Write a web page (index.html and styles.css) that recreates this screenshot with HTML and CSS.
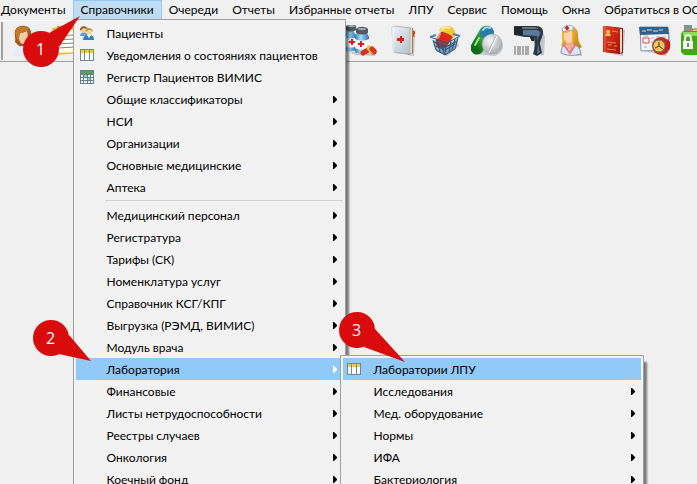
FILE: index.html
```html
<!DOCTYPE html>
<html lang="ru">
  <head>
    <meta charset="UTF-8" />
    <meta name="viewport" content="width=device-width, initial-scale=1.0" />
    <title>Справочники</title>
    <link rel="stylesheet" href="styles.css">
  </head>
  <body>
    <svg class="sprite" aria-hidden="true">
      <defs>
        <linearGradient id="glass" x1="0" x2="1" y1="0" y2="0">
          <stop offset="0" stop-color="#2d7fb8" />
          <stop offset="0.4" stop-color="#a5d8f5" />
          <stop offset="1" stop-color="#2f78b2" />
        </linearGradient>
        <linearGradient id="cover" x1="0" x2="1" y1="0" y2="1">
          <stop offset="0" stop-color="#eef3f6" />
          <stop offset="1" stop-color="#b4c2cb" />
        </linearGradient>
        <linearGradient id="red" x1="0" x2="1" y1="0" y2="1">
          <stop offset="0" stop-color="#e8442c" />
          <stop offset="1" stop-color="#a80c08" />
        </linearGradient>
        <radialGradient id="silver" cx="0.4" cy="0.35" r="0.7">
          <stop offset="0" stop-color="#f8f8f8" />
          <stop offset="1" stop-color="#a4a7ad" />
        </radialGradient>
        <linearGradient id="greenpill" x1="1" x2="0" y1="0" y2="1">
          <stop offset="0" stop-color="#5fd04c" />
          <stop offset="1" stop-color="#0c6d1b" />
        </linearGradient>
        <linearGradient id="hair" x1="0" x2="1" y1="0" y2="1">
          <stop offset="0" stop-color="#f3c244" />
          <stop offset="1" stop-color="#c87c14" />
        </linearGradient>
      </defs>
      <symbol id="i-table" viewBox="0 0 16 16">
        <path d="M1 2h14v12H1z" fill="#6f8796" />
        <path d="M2 3h3v3H2zM6 3h4v3H6zM11 3h3v3h-3z" fill="#f2cc3c" />
        <path d="M2 6h3v7H2zM6 6h4v7H6zM11 6h3v7h-3z" fill="#fbfdff" />
      </symbol>
      <symbol id="i-grid" viewBox="0 0 16 16">
        <path d="M1 1h14v14H1z" fill="#667f8e" />
        <path d="M2 2h12v3H2z" fill="#5c9b62" />
        <path d="M2 6h2v2H2zM5 6h3v2H5zM9 6h2v2H9zM12 6h2v2h-2zM2 9h2v2H2zM5 9h3v2H5zM12 9h2v2h-2zM2 12h2v2H2zM5 12h3v2H5zM9 12h2v2H9zM12 12h2v2h-2z" fill="#f5fafc" />
        <path d="M5 6h3v2H5zM9 9h2v2H9z" fill="#9dcc9d" />
      </symbol>
      <symbol id="i-people" viewBox="0 0 16 16">
        <path d="M1 11c0-3 2-4 4-4s4 1 4 4z" fill="#5ba2d8" />
        <circle cx="5" cy="5" r="3" fill="#f4c894" />
        <path d="M1 6c-1-6 7-6 8-2-3-1-5-1-6 0z" fill="#8d6124" />
        <path d="M4 15c0-4 3-5 6-5s5 1 5 5z" fill="#2f81c3" />
        <path d="M8 10l2 3 2-3z" fill="#fff" />
        <circle cx="10" cy="7" r="3" fill="#f9d3a4" />
        <path d="M7 7c-1-5 7-5 7 0l-2-2-3 0z" fill="#bd8427" />
      </symbol>
      <symbol id="i-user" viewBox="0 0 32 32">
        <path d="M6 17C7 13 5 10 6 6c2-7 15-7 16 1 1 5 0 9 3 13L14 25z" fill="#9d5820" />
        <path d="M4 31c0-8 4-10 10-10s10 3 10 10z" fill="#e4edf5" />
        <path d="M10 8c2 0 6-1 8-2 2 6 0 13-4 13-3 0-5-5-4-11z" fill="#f8cca0" />
        <path d="M6 8C8-1 18 0 20 5c-4 2-8 2-9 4l-2 8z" fill="#c27a30" />
      </symbol>
      <symbol id="i-list" viewBox="0 0 32 32">
        <path d="M1 3l22-2 6 27-24 2z" fill="#e9b92e" />
        <path d="M2 7l21-2 5 22-22 1z" fill="#fffef0" />
        <path d="M4 11l18-1M5 15l18-1M6 19l18-1M6 23l19-1" stroke="#7c8793" />
        <path d="M6 1h11l2 5H5z" fill="#c9a238" />
      </symbol>
      <symbol id="i-bottles" viewBox="0 0 32 32">
        <path d="M5 28l7 2 18 1 2-5-8-4z" fill="#c3c5cf" />
        <path d="M-1 6h9l3 4v15c-4 2-9 2-13 0V10z" fill="url(#glass)" />
        <path d="M1 1c2-2 9-2 10 0v4c-3 2-7 2-10 0z" fill="#525b64" />
        <ellipse cx="6" cy="1" rx="4" ry="1" fill="#a4abb1" />
        <path d="M0 12c4 2 8 2 11 0v9c-4 2-7 2-11 0z" fill="#f6f8fb" />
        <path d="M6 14h2v2h2v2H8v2H6v-2H4v-2h2z" fill="#e91818" />
        <path d="M12 8h10l2 4v15c-4 2-10 2-14 0V12z" fill="url(#glass)" />
        <path d="M11 4c3-3 9-3 12 0v4c-4 2-8 2-12 0z" fill="#525b64" />
        <ellipse cx="17" cy="4" rx="4" ry="1" fill="#a4abb1" />
        <path d="M10 14c4 2 10 2 14 0v9c-4 2-10 2-14 0z" fill="#f6f8fb" />
        <path d="M15 16h2v2h2v2h-2v2h-2v-2h-2v-2h2z" fill="#e91818" />
        <path d="M18 28l5-3" stroke="#d7321c" stroke-width="5" stroke-linecap="round" />
        <path d="M28 27l1 0" stroke="#d7321c" stroke-width="5" stroke-linecap="round" />
        <path d="M24 23l3 3" stroke="#f6c83e" stroke-width="5" stroke-linecap="round" />
        <path d="M27 24l2 2" stroke="#d7321c" stroke-width="5" stroke-linecap="round" />
      </symbol>
      <symbol id="i-book" viewBox="0 0 32 32">
        <path d="M8 28l19 3 1-24-3-1z" fill="#c3c5cf" />
        <path d="M24 5l4 1v3l-1 1 1 2-4-1z" fill="#e23b27" />
        <path d="M8 1l18 2v25l-5 2z" fill="#a77d4e" />
        <path d="M21 4l4-1v25l-3 1z" fill="#e8dcc4" />
        <path d="M5 2l3-1 15 2v26L6 27z" fill="url(#cover)" stroke="#93a2ac" stroke-width="0.5" />
        <path d="M6 2v25" stroke="#fff" />
        <path d="M13 11h2v2h2v3h-2v2h-2v-2h-3v-3h3z" fill="#e81b1b" />
      </symbol>
      <symbol id="i-basket" viewBox="0 0 32 32">
        <path d="M8 26l10 5 12-10-2-5z" fill="#c3c5cf" />
        <path d="M13 17l6-9" stroke="#d82b19" stroke-width="13" stroke-linecap="round" />
        <path d="M10 6c2-5 8-6 12-4 4 2 5 7 3 11-4-4-9-6-15-7z" fill="#f4c832" />
        <path d="M13 5c2-3 5-3 7-2" stroke="#fff2a0" stroke-width="2" fill="none" stroke-linecap="round" />
        <path d="M9 13l2-4" stroke="#f48b70" stroke-width="2" stroke-linecap="round" />
        <path d="M4 15l14 5 11-7-4 11-9 6-9-4z" fill="#2b5684" fill-opacity="0.4" />
        <path d="M1 12l17 6 13-7M4 15l3 10 9 5 10-6 3-11M5 17l12 5 11-6M6 21l10 4 10-6M8 15l3 12M13 17l2 12M17 18l-1 12M22 16l-2 12M26 14l-3 11" fill="none" stroke="#255681" />
        <path d="M1 12l6-2M24 9l7 2" fill="none" stroke="#4f82ae" stroke-width="2" />
      </symbol>
      <symbol id="i-pills" viewBox="0 0 32 32">
        <path d="M5 29l19 2c10-4 9-13 5-17z" fill="#c3c5cf" />
        <path d="M15 7L6 23" stroke="url(#greenpill)" stroke-width="13" stroke-linecap="round" />
        <path d="M9 7c2-8 13-8 14 0 0 4-3 7-4 9-4-1-7-3-10-5z" fill="#2b7ba9" />
        <path d="M12 5c2-3 5-3 7-2" fill="none" stroke="#9fdcf3" stroke-width="2" stroke-linecap="round" />
        <path d="M4 20l4-7" stroke="#8ff079" stroke-width="2" stroke-linecap="round" />
        <circle cx="21" cy="19" r="10" fill="url(#silver)" stroke="#9b9ea5" stroke-width="0.5" />
        <path d="M17 28l8-17" stroke="#b0b3b8" />
        <path d="M18 28l8-17" stroke="#fff" />
      </symbol>
      <symbol id="i-scanner" viewBox="0 0 32 32">
        <path d="M20 11l9-7 3 8-1 18h-6z" fill="#c3c5cf" />
        <path d="M1 1h22c5 0 7 3 7 6 0 5-3 8-3 12l2 9-5 3-4-2c2-5 2-12 1-17H12L1 10z" fill="#2c3641" />
        <path d="M10 5h14c4 1 4 3 2 6s-1 11 1 16l-3 2c1-8 1-13 0-18l-14-1z" fill="#587a9f" />
        <path d="M3 2h19l4 2H7z" fill="#69737c" />
        <path d="M1 2h8l1 8-9-1z" fill="#20262c" />
        <path d="M17 12h4v4c-3 1-3-1-4-4z" fill="#222930" />
        <path d="M2 21v9M5 21v9M7 21v9M10 21v9M13 21v9M15 21v9" stroke="#666" />
      </symbol>
      <symbol id="i-nurse" viewBox="0 0 32 32">
        <path d="M10 29l17 2-3-10z" fill="#b5b8c5" />
        <path d="M7 8c1-9 16-9 16 1 0 6 1 9 4 13-6 4-16 2-21-1 3-5 0-8 1-13z" fill="url(#hair)" />
        <path d="M6 28c0-6 3-9 9-9s10 3 11 10c-7 2-14 2-20-1z" fill="#dbe4f6" stroke="#8495b8" />
        <path d="M12 15h6v5l-2 6-5-6z" fill="#f2ad84" />
        <path d="M9 8c3 0 6-1 8-3 2 7 0 13-3 13-4 0-6-5-5-10z" fill="#fed2aa" />
        <path d="M9 20l6 8 5-8" stroke="#f06f82" stroke-width="2" fill="none" />
        <path d="M17 5c2 0 4 6 1 13-1-6 0-9-1-13z" fill="#e5a52c" />
        <path d="M7 4c3-4 8-5 11-2v4c-4-2-7-1-10 1z" fill="#fff" stroke="#93a0bb" />
        <path d="M12 1v4M10 3h4" stroke="#e51e1e" stroke-width="2" />
      </symbol>
      <symbol id="i-passport" viewBox="0 0 32 32">
        <path d="M10 28l16 3 2-26-4-2z" fill="#bfc1cb" />
        <path d="M8 1l18 2v25l-4 1z" fill="#851c12" />
        <path d="M23 4l2 0v23l-2 1z" fill="#f1ddbd" />
        <path d="M6 1h2l15 2v26L6 27z" fill="url(#red)" />
        <path d="M8 1v26" stroke="#ef6b4b" />
        <circle cx="11" cy="7" r="2" fill="#f9cd55" />
        <path d="M8 11c0-3 6-3 6 0z" fill="#f9cd55" />
        <path d="M15 6l6 1M10 17l9 1M11 20l4 0M17 21h3M10 24l9 1" stroke="#ec8c39" />
      </symbol>
      <symbol id="i-calendar" viewBox="0 0 32 32">
        <path d="M5 26l22 5 5-10-2-17z" fill="#c0c4ce" />
        <path d="M1 2l28 0 1 23-28 1z" fill="#f2f6fb" stroke="#8294ab" />
        <path d="M0 2l29 0 1 7-29 1z" fill="#2e608c" />
        <path d="M3 6h4M8 5h5M14 6h5M20 5h4" stroke="#c9e3f3" />
        <path d="M12 13h3M17 12h4M23 12h4M12 17h2M5 22h3M5 11h4" stroke="#a5b3c1" />
        <path d="M4 13h6v5H4z" fill="#fff" stroke="#e83d2e" />
        <circle cx="22" cy="21" r="9" fill="#ca2b1b" />
        <path d="M28 14l3 3v6l-5 6z" fill="#c12216" />
        <circle cx="20" cy="21" r="6" fill="#f7c752" stroke="#68727a" />
        <path d="M20 17v4l4 3M20 21l-4 2" stroke="#34363a" fill="none" />
      </symbol>
      <symbol id="i-lock" viewBox="0 0 32 32">
        <path d="M11 4h12v9H11z" fill="#edcb73" stroke="#957b3b" />
        <path d="M2 6h17l3 4v17l-4 3H3l-3-3V9z" fill="#43a716" />
        <path d="M2 7h14v4H2z" fill="#8edb57" />
        <path d="M3 0h8v6H3z" fill="#8a8f94" />
        <path d="M4 17v-3c0-5 6-5 6 0v3" fill="none" stroke="#fff" stroke-width="2" />
        <path d="M2 16h10v8H2z" fill="#fff" />
        <path d="M7 18v4" stroke="#53ac2b" stroke-width="2" />
      </symbol>
      <symbol id="i-arrow" viewBox="0 0 4 7">
        <path d="M0 0h1l3 3v1L1 7H0z" fill="currentColor" />
      </symbol>
    </svg>

    <header>
      <nav class="menubar">
        <div class="menubar-item"><button type="button">Документы</button></div>
        <div class="menubar-item open">
          <button type="button">Справочники</button>
          <ul class="menu">
            <li><button type="button"><svg class="icon"><use href="#i-people" /></svg><span>Пациенты</span></button></li>
            <li><button type="button"><svg class="icon"><use href="#i-table" /></svg><span>Уведомления о состояниях пациентов</span></button></li>
            <li><button type="button"><svg class="icon"><use href="#i-grid" /></svg><span>Регистр Пациентов ВИМИС</span></button></li>
            <li><button type="button"><span>Общие классификаторы</span><svg class="arrow"><use href="#i-arrow" /></svg></button></li>
            <li><button type="button"><span>НСИ</span><svg class="arrow"><use href="#i-arrow" /></svg></button></li>
            <li><button type="button"><span>Организации</span><svg class="arrow"><use href="#i-arrow" /></svg></button></li>
            <li><button type="button"><span>Основные медицинские</span><svg class="arrow"><use href="#i-arrow" /></svg></button></li>
            <li><button type="button"><span>Аптека</span><svg class="arrow"><use href="#i-arrow" /></svg></button></li>
            <li class="separator"></li>
            <li><button type="button"><span>Медицинский персонал</span><svg class="arrow"><use href="#i-arrow" /></svg></button></li>
            <li><button type="button"><span>Регистратура</span><svg class="arrow"><use href="#i-arrow" /></svg></button></li>
            <li><button type="button"><span>Тарифы (СК)</span><svg class="arrow"><use href="#i-arrow" /></svg></button></li>
            <li><button type="button"><span>Номенклатура услуг</span><svg class="arrow"><use href="#i-arrow" /></svg></button></li>
            <li><button type="button"><span>Справочник КСГ/КПГ</span><svg class="arrow"><use href="#i-arrow" /></svg></button></li>
            <li><button type="button"><span>Выгрузка (РЭМД, ВИМИС)</span><svg class="arrow"><use href="#i-arrow" /></svg></button></li>
            <li><button type="button"><span>Модуль врача</span><svg class="arrow"><use href="#i-arrow" /></svg></button></li>
            <li class="selected">
              <button type="button"><span>Лаборатория</span><svg class="arrow"><use href="#i-arrow" /></svg></button>
              <ul class="menu submenu">
                <li class="selected"><button type="button"><svg class="icon"><use href="#i-table" /></svg><span>Лаборатории ЛПУ</span></button></li>
                <li><button type="button"><span>Исследования</span><svg class="arrow"><use href="#i-arrow" /></svg></button></li>
                <li><button type="button"><span>Мед. оборудование</span><svg class="arrow"><use href="#i-arrow" /></svg></button></li>
                <li><button type="button"><span>Нормы</span><svg class="arrow"><use href="#i-arrow" /></svg></button></li>
                <li><button type="button"><span>ИФА</span><svg class="arrow"><use href="#i-arrow" /></svg></button></li>
                <li><button type="button"><span>Бактериология</span><svg class="arrow"><use href="#i-arrow" /></svg></button></li>
              </ul>
            </li>
            <li><button type="button"><span>Финансовые</span><svg class="arrow"><use href="#i-arrow" /></svg></button></li>
            <li><button type="button"><span>Листы нетрудоспособности</span><svg class="arrow"><use href="#i-arrow" /></svg></button></li>
            <li><button type="button"><span>Реестры случаев</span><svg class="arrow"><use href="#i-arrow" /></svg></button></li>
            <li><button type="button"><span>Онкология</span><svg class="arrow"><use href="#i-arrow" /></svg></button></li>
            <li><button type="button"><span>Коечный фонд</span><svg class="arrow"><use href="#i-arrow" /></svg></button></li>
          </ul>
        </div>
        <div class="menubar-item"><button type="button">Очереди</button></div>
        <div class="menubar-item"><button type="button">Отчеты</button></div>
        <div class="menubar-item"><button type="button">Избранные отчеты</button></div>
        <div class="menubar-item"><button type="button">ЛПУ</button></div>
        <div class="menubar-item"><button type="button">Сервис</button></div>
        <div class="menubar-item"><button type="button">Помощь</button></div>
        <div class="menubar-item"><button type="button">Окна</button></div>
        <div class="menubar-item"><button type="button">Обратиться в ООО</button></div>
      </nav>

      <div class="toolbar">
        <div class="grip"></div>
        <div class="tools">
          <button type="button"><svg><use href="#i-user" /></svg></button>
          <button type="button"><svg><use href="#i-list" /></svg></button>
        </div>
        <div class="tools">
          <button type="button"><svg><use href="#i-bottles" /></svg></button>
          <button type="button"><svg><use href="#i-book" /></svg></button>
          <button type="button"><svg><use href="#i-basket" /></svg></button>
          <button type="button"><svg><use href="#i-pills" /></svg></button>
          <button type="button"><svg><use href="#i-scanner" /></svg></button>
          <button type="button"><svg><use href="#i-nurse" /></svg></button>
          <button type="button"><svg><use href="#i-passport" /></svg></button>
          <button type="button"><svg><use href="#i-calendar" /></svg></button>
          <button type="button"><svg><use href="#i-lock" /></svg></button>
        </div>
      </div>
    </header>

    <!-- numbered step markers -->
    <div class="step step-1">
      <svg viewBox="0 0 60 54"><path d="M58 0L27 17 37 31z" /><circle cx="19" cy="33" r="18" /></svg>
      <span>1</span>
    </div>
    <div class="step step-2">
      <svg viewBox="0 0 60 54"><path d="M59 42L37 16 27 35z" /><circle cx="19" cy="19" r="18" /></svg>
      <span>2</span>
    </div>
    <div class="step step-3">
      <svg viewBox="0 0 70 54"><path d="M67 51L37 18 26 36z" /><circle cx="19" cy="19" r="18" /></svg>
      <span>3</span>
    </div>
  </body>
</html>
```
FILE: styles.css
```css
:root {
  --window-color: #f0f0f0;
  --menu-color: #f2f2f2;
  --border-color: #a0a0a0;
  --selected-color: #91c9f7;
  --open-color: #bfdcf2;
  --step-color: #d90b0d;
}

* {
  box-sizing: border-box;
}

body {
  margin: 0;
  height: 100vh;
  overflow: hidden;
  position: relative;
  background: var(--window-color);
  color: #000;
  font-family: Lato, "Open Sans", sans-serif;
  font-size: 12px;
}

button {
  border: 0;
  padding: 0;
  background: none;
  color: inherit;
  font: inherit;
  white-space: nowrap;
}

.sprite {
  position: absolute;
  width: 0;
  height: 0;
}

/* menu bar */
.menubar {
  display: flex;
  height: 20px;
  margin-left: -6px;
}

.menubar-item {
  position: relative;
}

.menubar-item > button {
  height: 20px;
  padding: 0 7px;
  line-height: 18px;
}

.menubar-item.open > button {
  background: var(--open-color);
  border: 1px solid var(--selected-color);
}

/* drop-down menus */
.menu {
  position: absolute;
  z-index: 1;
  top: 19px;
  left: 0;
  width: 273px;
  margin: 0;
  padding: 2px;
  list-style: none;
  background: var(--menu-color);
  border: 1px solid var(--border-color);
  box-shadow: 4px 6px 2px -1px rgba(0, 0, 0, 0.5);
}

.menu li {
  position: relative;
}

.menu li > button {
  display: flex;
  align-items: center;
  width: 100%;
  height: 22px;
  padding: 0 6px 0 31px;
  text-align: left;
}

.menu li.selected > button {
  background: var(--selected-color);
}

.menu > .selected > button .arrow {
  color: #fff;
}

.icon {
  width: 16px;
  height: 16px;
  margin-left: -28px;
  margin-right: 12px;
}

.arrow {
  width: 4px;
  height: 7px;
  margin-left: auto;
}

.separator {
  height: 6px;
  margin-left: 29px;
  padding-top: 2px;
}

.separator::before {
  content: "";
  display: block;
  border-top: 1px solid #d0d0d0;
}

.submenu {
  top: -3px;
  left: 264px;
  width: 304px;
}

/* toolbar */
.toolbar {
  display: flex;
  height: 42px;
  border-top: 1px solid #fff;
  border-bottom: 1px solid var(--border-color);
}

.grip {
  width: 5px;
  margin: 1px 1px 1px 1px;
  border-left: 1px solid var(--border-color);
  border-right: 1px solid var(--border-color);
}

.tools {
  display: flex;
}

.tools + .tools {
  margin-left: 252px;
}

.tools button {
  width: 42px;
  height: 40px;
  padding: 4px 5px;
}

.tools svg {
  display: block;
  width: 32px;
  height: 32px;
}

/* step markers */
.step {
  position: absolute;
  z-index: 2;
  color: #fff;
  font-family: "Open Sans", sans-serif;
  font-size: 16px;
  line-height: 20px;
}

.step svg {
  display: block;
  width: 60px;
  height: 54px;
  fill: var(--step-color);
}

.step span {
  position: absolute;
  left: 14px;
  top: 9px;
}

.step-1 {
  left: 22px;
  top: 16px;
}

.step-1 span {
  top: 23px;
}

.step-2 {
  left: 32px;
  top: 319px;
}

.step-3 {
  left: 338px;
  top: 311px;
}

.step-3 svg {
  width: 70px;
}
```
